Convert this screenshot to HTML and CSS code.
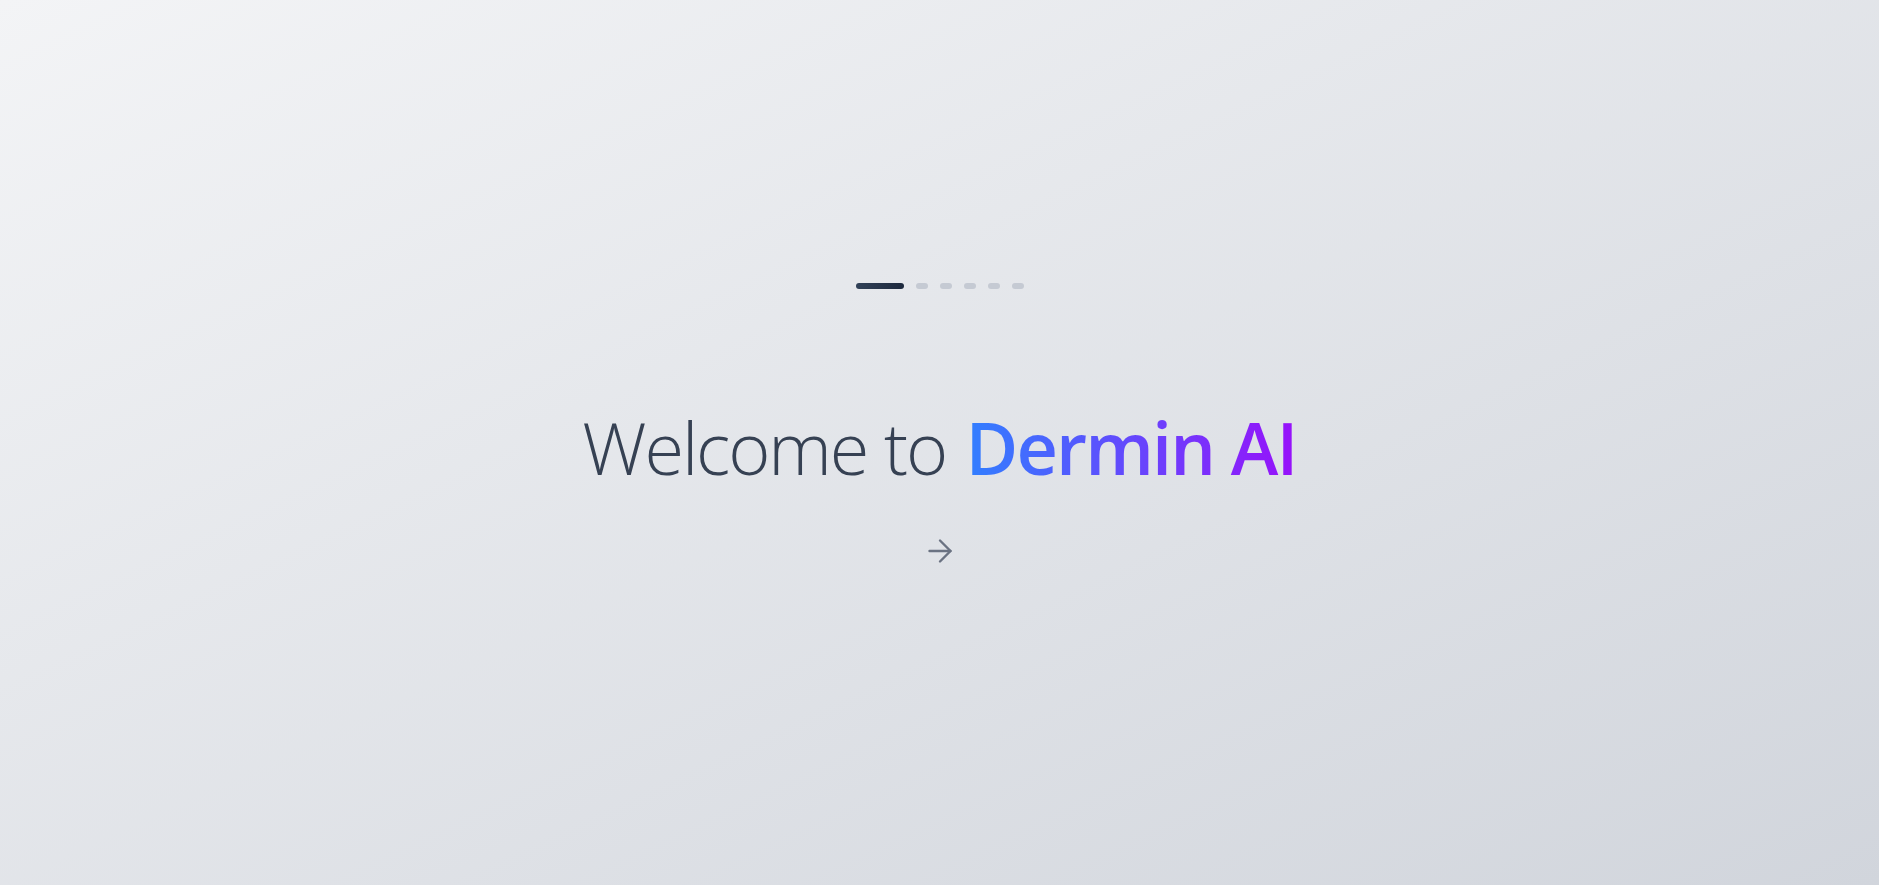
FILE: index.html
```html
<!DOCTYPE html>
<html lang="en">
<head>
<meta charset="utf-8">
<title>Dermin AI</title>
<link rel="stylesheet" href="styles.css">
</head>
<body>
<main class="screen">
  <div class="dots">
    <span class="dot dot-active"></span>
    <span class="dot"></span>
    <span class="dot"></span>
    <span class="dot"></span>
    <span class="dot"></span>
    <span class="dot"></span>
  </div>
  <h1 class="title"><span class="title-light">Welcome to </span><span class="title-brand">Dermin AI</span></h1>
  <button class="next" type="button" aria-label="Next">
    <svg width="36" height="36" viewBox="0 0 24 24" fill="none" stroke="currentColor" stroke-width="1.6" stroke-linecap="round" stroke-linejoin="round"><path d="M5 12h14"/><path d="m12 5 7 7-7 7"/></svg>
  </button>
</main>
</body>
</html>
```
FILE: styles.css
```css
* { box-sizing: border-box; }
html, body { margin: 0; padding: 0; height: 100%; }
body {
  font-family: "Open Sans", "Noto Sans", sans-serif;
  background: linear-gradient(to bottom right, #f3f4f6, #d1d5dc);
  min-height: 100vh;
}
.screen {
  min-height: 100vh;
  display: flex;
  flex-direction: column;
  align-items: center;
  padding-top: 283px;
}
.dots {
  display: flex;
  gap: 12px;
  height: 6px;
}
.dot {
  display: block;
  width: 12px;
  height: 6px;
  border-radius: 3px;
  background: #c5cad3;
}
.dot-active {
  width: 48px;
  background: linear-gradient(to right, #314158, #1d293d);
}
.title {
  margin: 122px 0 0;
  font-size: 72px;
  line-height: 72px;
  font-weight: 300;
  color: #364153;
  white-space: nowrap;
}
.title-light {
  font-weight: 300;
  letter-spacing: -2.1px;
}
.title-brand {
  font-weight: 600;
  letter-spacing: -1.9px;
  padding-left: 3px;
  background: linear-gradient(to right, #3080ff, #9810fa);
  -webkit-background-clip: text;
  background-clip: text;
  color: transparent;
}
.next {
  margin-top: 50px;
  border: 0;
  padding: 0;
  background: transparent;
  color: #6a7282;
  display: flex;
  cursor: pointer;
}
```
